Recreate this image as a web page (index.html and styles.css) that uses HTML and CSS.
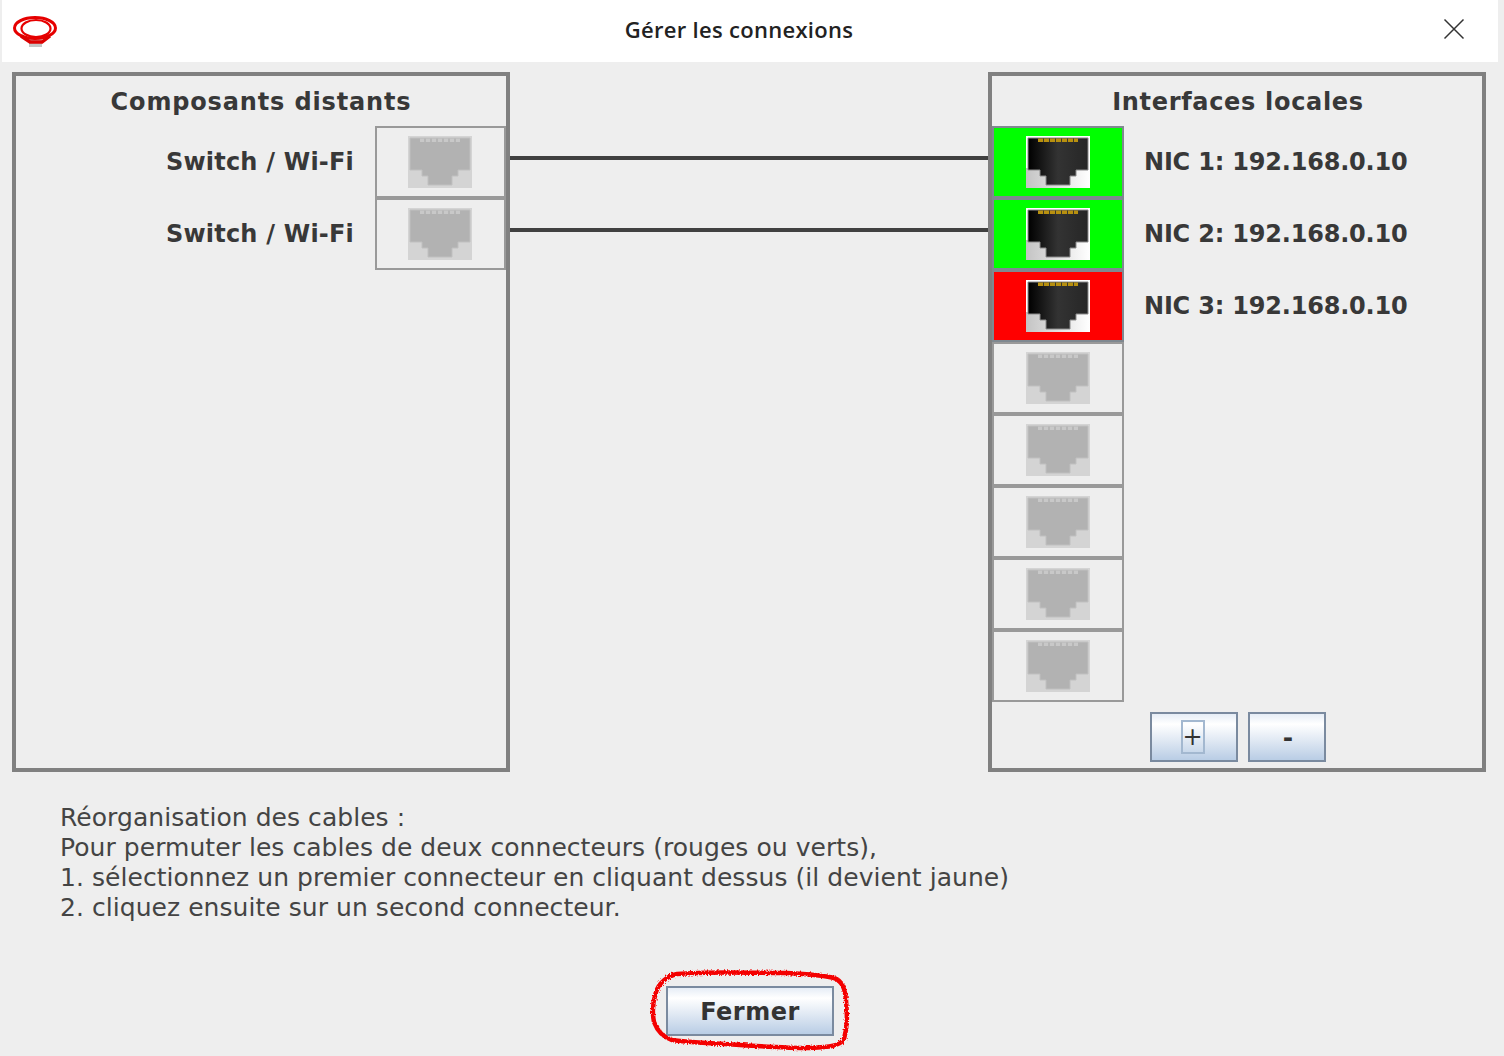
FILE: index.html
```html
<!DOCTYPE html>
<html lang="fr">
<head>
    <meta charset="UTF-8">
    <title>Gérer les connexions</title>
    <link rel="stylesheet" href="styles.css">
</head>
<body>
    <!-- Prises reutilisees partout -->
    <svg class="defs" width="0" height="0">
        <defs>
            <linearGradient id="plugBack" x1="0" x2="1" y1="0" y2="0">
                <stop offset="0" stop-color="#c4c4c4"/>
                <stop offset="1" stop-color="#ffffff"/>
            </linearGradient>
            <linearGradient id="plugBody" x1="0" x2="1" y1="0" y2="0">
                <stop offset="0" stop-color="#000000"/>
                <stop offset="0.5" stop-color="#333333"/>
                <stop offset="1" stop-color="#262626"/>
            </linearGradient>
            <symbol id="plugOn" viewBox="0 0 64 52">
                <rect width="64" height="52" fill="#ffffff"/>
                <rect y="32" width="64" height="20" fill="url(#plugBack)"/>
                <path d="M2 2H62V34H50V40H44V49H20V40H14V34H2Z" fill="url(#plugBody)" stroke="#8a8a8a" stroke-width="1"/>
                <path d="M12 2.5H52V6H12Z" fill="#b8900f"/>
                <path d="M17 2.5h1V6h-1zM23 2.5h1V6h-1zM29 2.5h1V6h-1zM35 2.5h1V6h-1zM41 2.5h1V6h-1zM47 2.5h1V6h-1z" fill="#3a3a2a"/>
            </symbol>
            <symbol id="plugOff" viewBox="0 0 64 52">
                <rect width="64" height="52" fill="#d4d4d4"/>
                <path d="M2 2H62V34H50V40H44V49H20V40H14V34H2Z" fill="#b2b2b2" stroke="#c0c0c0" stroke-width="1"/>
                <path d="M12 2.5H52V6H12Z" fill="#c8c8c8"/>
                <path d="M16 2.5h2V6h-2zM22 2.5h2V6h-2zM28 2.5h2V6h-2zM34 2.5h2V6h-2zM40 2.5h2V6h-2zM46 2.5h2V6h-2z" fill="#b6b6b6"/>
            </symbol>
            <filter id="soft" x="-5%" y="-5%" width="110%" height="110%">
                <feGaussianBlur stdDeviation="0.6"/>
            </filter>
        </defs>
    </svg>

    <div class="titlebar">
        <div class="title-logo">
            <svg width="46" height="34" viewBox="0 0 46 34">
                <g filter="url(#soft)">
                    <rect x="17" y="25" width="13" height="8" fill="#c4c4c4"/>
                    <ellipse cx="23" cy="14" rx="20.5" ry="10.5" fill="none" stroke="#e60000" stroke-width="3"/>
                    <ellipse cx="24" cy="14.5" rx="14.5" ry="8.5" fill="none" stroke="#e60000" stroke-width="2.2"/>
                    <path d="M9 22 L18 28 H30 L38 22" fill="none" stroke="#dc0000" stroke-width="3.4"/>
                </g>
            </svg>
        </div>
        <div class="title-text">Gérer les connexions</div>
        <div class="title-close">
            <svg width="22" height="22" viewBox="0 0 22 22">
                <path d="M1.5 1.5L20.5 20.5M20.5 1.5L1.5 20.5" stroke="#333333" stroke-width="1.5" fill="none"/>
            </svg>
        </div>
    </div>

    <div class="panels">
        <div class="panel">
            <div class="panel-title">Composants distants</div>
            <div class="remote-row">
                <span class="remote-label">Switch / Wi-Fi</span>
                <div class="cell remote-cell"><svg class="plug"><use href="#plugOff"/></svg></div>
            </div>
            <div class="remote-row">
                <span class="remote-label">Switch / Wi-Fi</span>
                <div class="cell remote-cell"><svg class="plug"><use href="#plugOff"/></svg></div>
            </div>
        </div>

        <div class="cables">
            <div class="cable"></div>
            <div class="cable"></div>
        </div>

        <div class="panel">
            <div class="panel-title panel-title-local">Interfaces locales</div>
            <div class="local-row">
                <div class="cell local-cell green"><svg class="plug"><use href="#plugOn"/></svg></div>
                <span class="nic-label">NIC 1: 192.168.0.10</span>
            </div>
            <div class="local-row">
                <div class="cell local-cell green"><svg class="plug"><use href="#plugOn"/></svg></div>
                <span class="nic-label">NIC 2: 192.168.0.10</span>
            </div>
            <div class="local-row">
                <div class="cell local-cell red"><svg class="plug"><use href="#plugOn"/></svg></div>
                <span class="nic-label">NIC 3: 192.168.0.10</span>
            </div>
            <div class="local-row"><div class="cell local-cell"><svg class="plug"><use href="#plugOff"/></svg></div></div>
            <div class="local-row"><div class="cell local-cell"><svg class="plug"><use href="#plugOff"/></svg></div></div>
            <div class="local-row"><div class="cell local-cell"><svg class="plug"><use href="#plugOff"/></svg></div></div>
            <div class="local-row"><div class="cell local-cell"><svg class="plug"><use href="#plugOff"/></svg></div></div>
            <div class="local-row"><div class="cell local-cell"><svg class="plug"><use href="#plugOff"/></svg></div></div>
            <div class="panel-buttons">
                <button class="btn btn-plus"><span class="focus-box">+</span></button>
                <button class="btn btn-minus">-</button>
            </div>
        </div>
    </div>

    <div class="note">
        Réorganisation des cables :<br>
        Pour permuter les cables de deux connecteurs (rouges ou verts),<br>
        1. sélectionnez un premier connecteur en cliquant dessus (il devient jaune)<br>
        2. cliquez ensuite sur un second connecteur.
    </div>

    <div class="footer">
        <button class="btn btn-close">Fermer</button>
        <svg class="scribble" width="210" height="90" viewBox="0 0 210 90">
            <defs>
                <filter id="rough" x="-5%" y="-5%" width="110%" height="110%">
                    <feTurbulence type="fractalNoise" baseFrequency="0.7" numOctaves="2" seed="4"/>
                    <feDisplacementMap in="SourceGraphic" scale="4"/>
                </filter>
            </defs>
            <path d="M27 6C60 3 100 5 137 5C155 6 172 7 184 10C193 13 195 22 196 32C197 45 198 58 194 71C190 78 180 79 160 80C135 80 105 78 75 76C55 75 35 74 22 72C12 69 7 62 4 54C2 44 3 33 6 24C9 15 17 8 27 6Z" fill="none" stroke="#f40000" stroke-width="4.5" filter="url(#rough)"/>
        </svg>
    </div>
</body>
</html>
```

FILE: styles.css
```css
body {
    margin: 0;
    height: 1056px;
    overflow: hidden;
    background: #eeeeee;
    font-family: "DejaVu Sans", sans-serif;
    color: #383838;
}
.defs {
    position: absolute;
}
.titlebar {
    display: flex;
    align-items: center;
    height: 62px;
    margin: 0 6px 0 2px;
    background: #ffffff;
}
.title-logo {
    width: 60px;
    padding-left: 10px;
    box-sizing: border-box;
    display: flex;
}
.title-text {
    flex: 1;
    margin-bottom: 4px;
    text-align: center;
    font-family: "Open Sans", sans-serif;
    font-weight: 600;
    font-size: 22px;
    letter-spacing: 0.3px;
    color: #222222;
}
.title-close {
    width: 82px;
    padding: 0 0 4px 27px;
    box-sizing: border-box;
    display: flex;
}
.panels {
    display: flex;
    margin: 10px 18px 0 12px;
    height: 700px;
}
.panel {
    width: 498px;
    box-sizing: border-box;
    border: 4px solid #808080;
}
.panel-title {
    height: 50px;
    line-height: 52px;
    text-align: center;
    font-size: 24px;
    font-weight: bold;
    letter-spacing: 0.85px;
}
.panel-title-local {
    letter-spacing: 0.68px;
    padding-left: 2px;
}
.cables {
    flex: 1;
    padding-top: 84px;
}
.cable {
    height: 4px;
    margin-bottom: 68px;
    background: #404040;
}
.remote-row {
    display: flex;
    justify-content: flex-end;
    align-items: center;
    height: 72px;
    font-size: 24px;
    font-weight: bold;
}
.remote-label {
    margin-right: 21px;
    letter-spacing: 0.2px;
}
.cell {
    display: flex;
    align-items: center;
    justify-content: center;
    height: 72px;
    box-sizing: border-box;
    border: 2px solid #999999;
}
.remote-cell {
    width: 131px;
    padding-right: 1px;
}
.local-row {
    display: flex;
    align-items: center;
    height: 72px;
    font-size: 24px;
    font-weight: bold;
}
.local-cell {
    width: 132px;
}
.green {
    background: #00ff00;
    border-color: #7f8890;
}
.red {
    background: #ff0000;
    border-color: #7f8890;
}
.nic-label {
    margin-left: 20px;
    letter-spacing: -0.2px;
}
.plug {
    width: 64px;
    height: 52px;
}
.panel-buttons {
    display: flex;
    justify-content: center;
    gap: 10px;
    margin-top: 10px;
    padding-left: 2px;
}
.btn {
    padding: 0;
    box-sizing: border-box;
    border: 2px solid #7a8a9f;
    background: linear-gradient(#e6edf6, #ffffff 22%, #e2eaf4 55%, #b9cde5);
    font-family: "DejaVu Sans", sans-serif;
    color: #333333;
}
.btn-plus {
    display: flex;
    align-items: center;
    justify-content: center;
    width: 88px;
    height: 50px;
    font-size: 24px;
}
.focus-box {
    width: 24px;
    height: 34px;
    box-sizing: border-box;
    border: 2px solid #a3b8d0;
    line-height: 30px;
    margin-left: -3px;
}
.btn-minus {
    width: 78px;
    height: 50px;
    padding-left: 2px;
    font-size: 25px;
    font-weight: bold;
}
.note {
    margin: 31px 0 0 60px;
    font-size: 25px;
    line-height: 30px;
    letter-spacing: 0.05px;
    color: #444444;
}
.footer {
    position: relative;
    display: flex;
    justify-content: center;
    margin: 63px 4px 0 0;
}
.btn-close {
    width: 168px;
    height: 50px;
    padding-top: 2px;
    font-size: 24px;
    font-weight: bold;
    letter-spacing: 0.5px;
}
.scribble {
    position: absolute;
    left: 650px;
    top: -18px;
}
```
